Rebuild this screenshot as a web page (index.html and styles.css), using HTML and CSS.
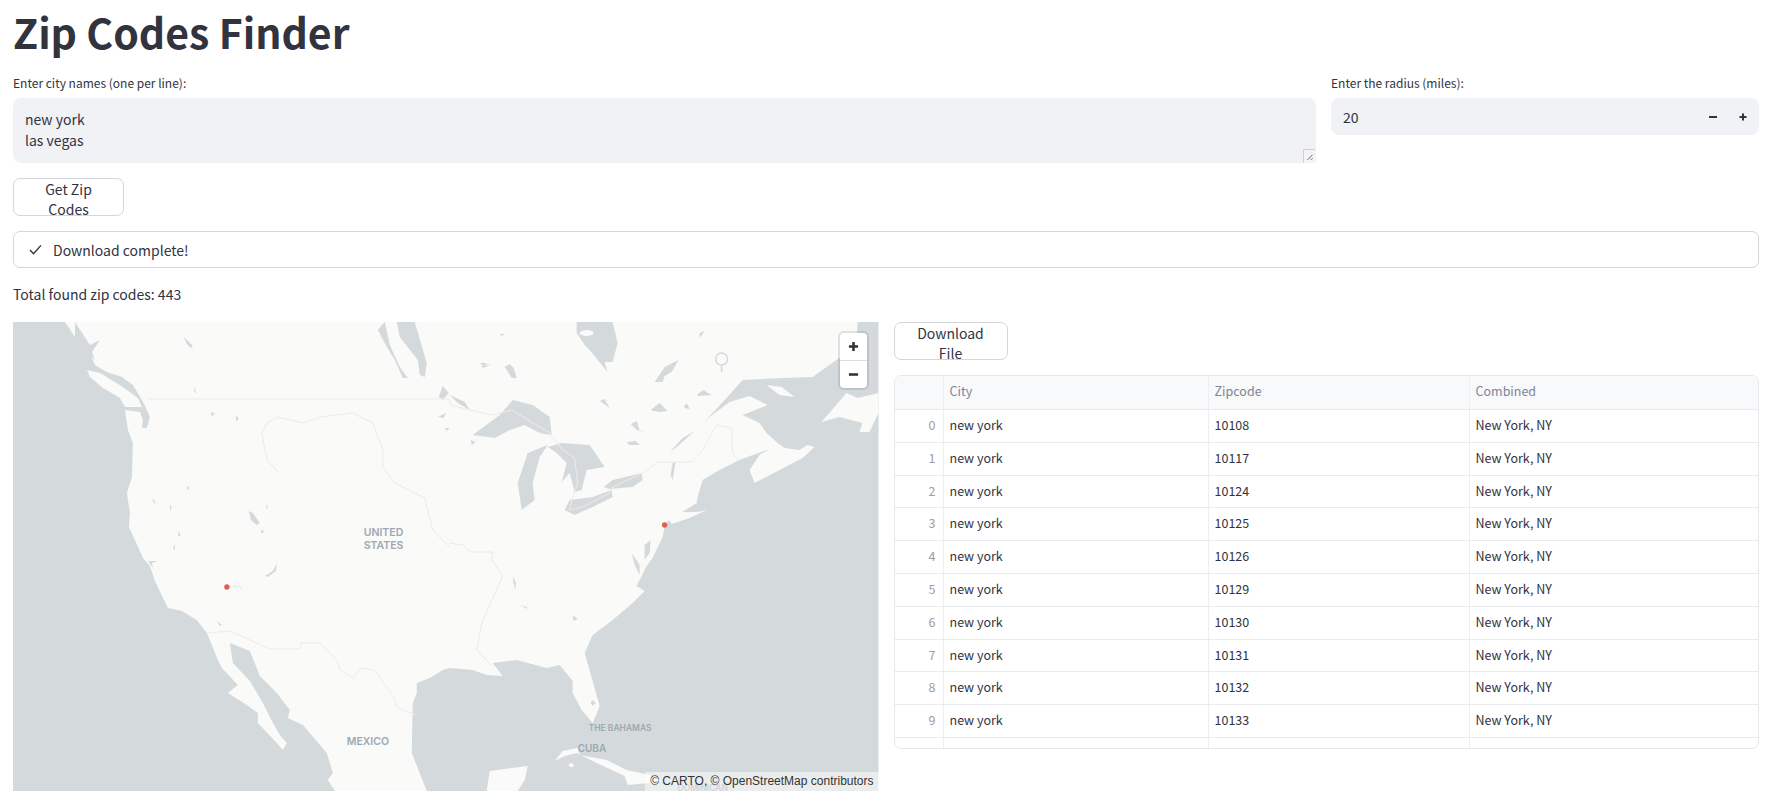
FILE: index.html
```html
<!DOCTYPE html>
<html lang="en">
<head>
<meta charset="utf-8">
<title>Zip Codes Finder</title>
<link rel="stylesheet" href="styles.css">
</head>
<body>
<main class="page">
  <h1 class="title">Zip Codes Finder</h1>
  <section class="inputs">
    <div class="field">
      <div class="label">Enter city names (one per line):</div>
      <div class="textarea">new york<br>las vegas
        <span class="resizer"><svg viewBox="0 0 14 14" class="resizer-icon"><path d="M4 11 L10 5 M8 11 L10 9"/></svg></span>
      </div>
    </div>
    <div class="field">
      <div class="label">Enter the radius (miles):</div>
      <div class="number">
        <span class="number-value">20</span>
        <span class="stepper">
          <svg viewBox="0 0 10 10" class="step-icon"><path d="M1 5H9"/></svg>
          <svg viewBox="0 0 10 10" class="step-icon"><path d="M1.5 5H8.5M5 1.500V8.500"/></svg>
        </span>
      </div>
    </div>
  </section>
  <button class="btn get-btn">Get Zip Codes</button>
  <div class="alert">
    <svg viewBox="0 0 14 12" class="check"><path d="M1 6.500 L4.800 10.500 L13 1.500"/></svg>
    <span>Download complete!</span>
  </div>
  <p class="total">Total found zip codes: 443</p>
  <section class="results">
    <div class="map">
      <svg class="map-svg" viewBox="13 322 866 469" preserveAspectRatio="none">
        <rect class="water" x="13" y="322" width="866" height="469"/>
        <!-- North America -->
        <path class="land" d="M38 322 L65 322 L75 337 L90 353 L95 365 L107 372 L122 377 L133 385 L142 400 L147 410 L150 417 L147 428 L142 428 L143 420 L140 412 L125 410 L128 430 L133 443 L132 477 L127 493 L130 513 L129 527 L135 540 L143 558 L150 566 L155 581 L168 608 L182 611 L197 620 L207 633 L218 660 L222 668 L238 685 L228 693 L247 705 L258 713 L258 723 L277 743 L283 750 L287 743 L280 735 L273 723 L263 703 L250 681 L233 663 L230 643 L250 651 L260 676 L277 693 L290 710 L288 718 L303 725 L327 753 L333 773 L328 780 L335 791 L427 791 L412 753 L413 703 L417 693 L417 683 L430 678 L443 670 L450 668 L473 670 L487 675 L503 676 L493 663 L517 660 L547 668 L560 665 L573 681 L573 693 L582 710 L593 723 L600 706 L585 653 L593 635 L613 620 L633 603 L645 591 L637 586 L647 566 L653 558 L663 537 L665 527 L667 522 L697 503 L698 497 L703 480 L720 470 L740 460 L756 454 L770 449 L760 455 L750 470 L755 483 L780 470 L803 458 L815 447 L808 445 L800 450 L785 448 L778 443 L767 433 L760 423 L743 415 L768 405 L750 396 L730 402 L710 417 L693 433 L677 447 L663 457 L660 462 L672 450 L683 438 L697 430 L713 413 L727 398 L743 380 L783 378 L813 377 L837 360 L857 347 L858 322 Z"/>
        <path class="land" d="M87 370 L100 373 L120 385 L138 398 L142 407 L125 407 L120 398 L103 388 L90 377 Z"/>
        <path class="land" d="M822 422 L847 393 L858 398 L879 393 L879 413 L870 432 L860 432 L863 423 L840 417 Z"/>
        <path class="land" d="M767 385 L782 387 L795 397 L780 395 Z"/>
        <path class="land" d="M555 761 L563 751 L578 748 L580 755 L607 760 L627 770 L650 775 L663 781 L650 783 L628 785 L625 776 L597 763 L577 753 L565 756 Z"/>
        <path class="land" d="M487 791 L490 771 L528 766 L525 780 L518 791 Z"/>
        <path class="land" d="M665 512 L697 512 L707 510 L690 518 L672 524 Z"/>
        <path class="land" d="M569 764 L573 763 L574 767 L570 767 Z"/>
        <!-- Water on the land -->
        <g class="water">
          <path d="M45 322 L55 345 L48 336 L42 326 Z"/>
          <path d="M75 322 L90 345 L100 340 L92 352 L95 360 L86 352 L75 337 Z"/>
          <path d="M473 435 L500 415 L513 400 L533 405 L550 417 L552 435 L540 433 L525 425 L510 430 L495 438 Z"/>
          <path d="M522 510 L518 483 L528 453 L548 445 L540 457 L533 483 L535 500 Z"/>
          <path d="M548 447 L562 443 L590 445 L605 467 L587 470 L582 490 L575 492 L570 473 L562 482 L567 463 L557 453 Z"/>
          <path d="M565 510 L570 500 L593 497 L612 490 L613 497 L593 507 L575 515 Z"/>
          <path d="M604 487 L613 480 L642 473 L643 480 L633 487 L610 489 Z"/>
          <path d="M577 322 L613 322 L618 343 L613 362 L605 362 L608 372 L598 360 L590 350 L585 345 L577 333 Z"/>
          <path d="M397 322 L415 322 L427 363 L425 377 L420 375 L418 360 L400 337 Z"/>
          <path d="M378 330 L385 322 L390 345 L400 367 L408 378 L403 378 L395 360 L387 347 Z"/>
          <path d="M184 337 L193 346 L191 348 L187 344 Z"/>
          <path d="M195 387 L196 394 L194 391 Z"/>
          <path d="M211 412 L215 413 L212 417 Z"/>
          <path d="M236 415 L239 419 L236 421 Z"/>
          <path d="M187 486 L190 488 L188 490 Z"/>
          <path d="M153 498 L156 504 L153 502 Z"/>
          <path d="M170 505 L172 507 L170 511 Z"/>
          <path d="M179 531 L181 537 L178 535 Z"/>
          <path d="M175 544 L175 550 L173 548 Z"/>
          <path d="M249 511 L253 513 L260 523 L257 525 L251 520 Z"/>
          <path d="M267 504 L268 509 L266 508 Z"/>
          <path d="M262 529 L264 532 L261 534 Z"/>
          <path d="M443 386 L449 393 L443 400 L439 397 Z"/>
          <path d="M438 417 L446 413 L444 418 Z"/>
          <path d="M445 428 L450 428 L447 431 Z"/>
          <path d="M217 621 L222 625 L220 626 Z"/>
          <path d="M593 700 L596 703 L593 706 L591 703 Z"/>
          <path d="M505 367 L512 378 L517 378 L514 368 L510 364 Z"/>
          <path d="M480 363 L487 363 L484 366 Z"/>
          <path d="M481 366 L491 364 L484 368 Z"/>
          <path d="M500 334 L505 334 L502 336 Z"/>
          <path d="M655 382 L665 367 L679 360 L672 372 L665 376 L663 382 Z"/>
          <path d="M698 394 L704 390 L710 394 L712 395 L698 396 Z"/>
          <path d="M651 410 L660 403 L668 411 L660 412 L654 411 Z"/>
          <path d="M600 401 L605 399 L610 408 Z"/>
          <path d="M631 424 L637 421 L640 430 L646 432 L637 430 Z"/>
          <path d="M685 405 L688 404 L690 409 L685 408 Z"/>
          <path d="M627 442 L636 441 L640 445 L630 445 Z"/>
          <path d="M471 440 L476 442 L472 445 Z"/>
          <path d="M450 395 L465 402 L470 410 L458 403 Z"/>
          <path d="M673 463 L676 462 L673 480 L671 475 Z"/>
          <path d="M632 553 L640 565 L640 575 L635 565 Z"/>
          <path d="M645 545 L651 540 L650 553 L645 560 Z"/>
          <path d="M631 315 L635 320 Z"/>
          <path d="M700 333 L705 331 L700 338 Z"/>
          <path d="M513 576 L516 582 L516 590 L514 584 Z"/>
          <path d="M520 605 L527 607 L528 609 L522 606 Z"/>
          <path d="M573 615 L578 619 L574 621 Z"/>
          <path d="M265 576 L273 571 L277 563 L276 571 L268 577 Z"/>
          <path d="M148 561 L158 561 L152 563 L153 568 Z"/>
        </g>
        <g class="river">
          <path d="M262 433 L267 423 L278 417 L303 423 L320 417 L353 413 L373 423 L383 450 L383 467 L395 483 L425 498 L433 530 L450 547"/>
          <path d="M262 433 L267 460 L278 472"/>
          <path d="M450 543 L463 545 L470 552 L493 552 L492 560 L503 576 L482 623 L477 650 L492 666"/>
          <path d="M227 587 L235 587 L235 582 M235 587 L240 586 L243 591"/>
        </g>
        <ellipse class="land" cx="587" cy="333" rx="7" ry="3"/>
        <path class="ring" d="M722 353 A5 5 0 1 1 722 365 A5 5 0 1 1 722 353 M722 365 L722 372"/>
        <g class="border">
          <path d="M147 399 L450 399 L450 405 L470 410 L493 415 L512 410 L550 433 L563 450 L575 458 L578 483 L573 497 L570 510 L583 507 L610 493 L613 487 L643 473 L658 462 L692 462 L703 450 L717 425 L732 428 L733 453 L738 460"/>
          <path d="M207 633 L230 631 L270 649 L300 649 L301 643 L320 643 L337 660 L340 670 L354 678 L360 668 L375 670 L393 696 L398 708 L417 715"/>
        </g>
        <circle class="dot" cx="665" cy="525" r="2.700"/>
        <circle class="dot" cx="227" cy="587" r="2.700"/>
        <text class="place" x="364" y="536">UNITED</text>
        <text class="place" x="364" y="549">STATES</text>
        <text class="place" x="347" y="745">MEXICO</text>
        <text class="place place-sm" x="589" y="731">THE BAHAMAS</text>
        <text class="place place-md" x="578" y="752">CUBA</text>
        <text class="place place-sm" x="678" y="791">DOMINICAN</text>
      </svg>
      <div class="zoom-ctl">
        <span class="zoom-btn"><svg viewBox="0 0 12 12" class="zoom-icon"><path d="M1 6H11M6 1V11"/></svg></span>
        <span class="zoom-btn"><svg viewBox="0 0 12 12" class="zoom-icon"><path d="M1 6H11"/></svg></span>
      </div>
      <div class="attrib">© CARTO, © OpenStreetMap contributors</div>
    </div>
    <div class="side">
      <button class="btn dl-btn">Download File</button>
      <div class="table">
        <div class="row head"><span class="cell"></span><span class="cell">City</span><span class="cell">Zipcode</span><span class="cell">Combined</span></div>
        <div class="row"><span class="cell idx">0</span><span class="cell">new york</span><span class="cell">10108</span><span class="cell">New York, NY</span></div>
        <div class="row"><span class="cell idx">1</span><span class="cell">new york</span><span class="cell">10117</span><span class="cell">New York, NY</span></div>
        <div class="row"><span class="cell idx">2</span><span class="cell">new york</span><span class="cell">10124</span><span class="cell">New York, NY</span></div>
        <div class="row"><span class="cell idx">3</span><span class="cell">new york</span><span class="cell">10125</span><span class="cell">New York, NY</span></div>
        <div class="row"><span class="cell idx">4</span><span class="cell">new york</span><span class="cell">10126</span><span class="cell">New York, NY</span></div>
        <div class="row"><span class="cell idx">5</span><span class="cell">new york</span><span class="cell">10129</span><span class="cell">New York, NY</span></div>
        <div class="row"><span class="cell idx">6</span><span class="cell">new york</span><span class="cell">10130</span><span class="cell">New York, NY</span></div>
        <div class="row"><span class="cell idx">7</span><span class="cell">new york</span><span class="cell">10131</span><span class="cell">New York, NY</span></div>
        <div class="row"><span class="cell idx">8</span><span class="cell">new york</span><span class="cell">10132</span><span class="cell">New York, NY</span></div>
        <div class="row"><span class="cell idx">9</span><span class="cell">new york</span><span class="cell">10133</span><span class="cell">New York, NY</span></div>
        <div class="row"><span class="cell"></span><span class="cell"></span><span class="cell"></span><span class="cell"></span></div>
      </div>
    </div>
  </section>
</main>
</body>
</html>
```

FILE: styles.css
```css
* { box-sizing: border-box; }
html, body { margin: 0; background: #fff; overflow: hidden; }
body {
  font-family: "Noto Sans CJK SC", "Source Sans Pro", "Noto Sans", sans-serif;
  color: #31333f;
  font-size: 14px;
}
.page { display: flex; flex-direction: column; align-items: stretch; padding: 0 13px; height: 803px; }
.title { margin: 0; height: 73px; font-size: 41px; line-height: 62px; font-weight: 700; }
.inputs { display: grid; grid-template-columns: 1fr 428px; column-gap: 15px; height: 105px; }
.label { height: 25px; font-size: 12px; line-height: 20px; }
.textarea {
  position: relative; height: 65px; background: #f0f2f6; border-radius: 8px 8px 0 8px;
  padding: 11px 12px; font-size: 14px; line-height: 21px;
}
.resizer {
  position: absolute; right: 1px; bottom: 0; width: 12px; height: 14px;
  border: 1px solid #d0d0d0; border-width: 1px 0 0 1px; background: #f4f4f4;
}
.resizer-icon { display: block; width: 12px; height: 13px; fill: none; stroke: #555; stroke-width: 1; }
.number {
  height: 37px; background: #f0f2f6; border-radius: 8px; display: flex; align-items: center;
  justify-content: space-between; padding: 0 11px 0 12px; font-size: 14px;
}
.stepper { display: flex; gap: 20px; }
.step-icon { width: 10px; height: 10px; fill: none; stroke: #31333f; stroke-width: 2; display: block; }
.btn {
  font: inherit; color: #31333f; background: #fff; border: 1px solid #d5d6da; border-radius: 7px;
  height: 38px; padding: 0 12px; font-size: 14px; display: block;
}
.get-btn { align-self: flex-start; width: 111px; }
.alert {
  margin-top: 15px; height: 37px; border: 1px solid #d5d6da; border-radius: 7px;
  display: flex; align-items: center; gap: 11px; padding-left: 15px; font-size: 14px;
}
.check { width: 13px; height: 11px; fill: none; stroke: #31333f; stroke-width: 1.500; flex: none; }
.total { margin: 0; height: 54px; padding-top: 16px; line-height: 21px; font-size: 14px; }
.results { display: grid; grid-template-columns: 1fr 1fr; column-gap: 15px; }
.map { position: relative; height: 469px; overflow: hidden; }
.map-svg { display: block; width: 100%; height: 100%; }
.water { fill: #d4dadc; }
.land { fill: #fafaf8; }
.river path { fill: none; stroke: #e6ebec; stroke-width: 1; }
.ring { fill: none; stroke: #d4dadc; stroke-width: 1.500; }
.border path { fill: none; stroke: #f3e9e7; stroke-width: 1; }
.dot { fill: #dc6350; }
.place { font-family: Inter, "Noto Sans", sans-serif; font-size: 10.500px; font-weight: 600; fill: #9ea8b1; }
.place-sm { font-size: 8.500px; }
.place-md { font-size: 10px; }
.zoom-ctl {
  position: absolute; top: 11px; right: 12px; width: 27px; background: #fff; border-radius: 4px;
  box-shadow: 0 0 0 2px rgba(0, 0, 0, .1); display: flex; flex-direction: column;
}
.zoom-btn { height: 27px; display: flex; align-items: center; justify-content: center; }
.zoom-btn + .zoom-btn { border-top: 1px solid #ddd; height: 28px; }
.zoom-icon { width: 11px; height: 11px; fill: none; stroke: #333; stroke-width: 2.800; }
.attrib {
  position: absolute; right: 0; bottom: 0; height: 19px; padding: 0 5px;
  background: rgba(255, 255, 255, .5); color: #333;
  font: 12px/19px "Liberation Sans", Arial, sans-serif;
}
.dl-btn { width: 114px; }
.table {
  margin-top: 15px; height: 374px; border: 1px solid #e6e8ec; border-radius: 7px; overflow: hidden;
  font-size: 12.500px;
}
.row {
  display: grid; grid-template-columns: 48px 265px 261px 1fr; height: 32.800px;
  border-bottom: 1px solid #e9ebee;
}
.row.head { height: 34px; background: #f8f9fb; color: #808495; }
.cell { display: block; border-left: 1px solid #eceef1; padding: 0 6px; line-height: 30px; white-space: nowrap; }
.cell:first-child { border-left: 0; }
.idx { text-align: right; color: #9a9da8; padding-right: 7px; }
.side { display: flex; flex-direction: column; }
```
